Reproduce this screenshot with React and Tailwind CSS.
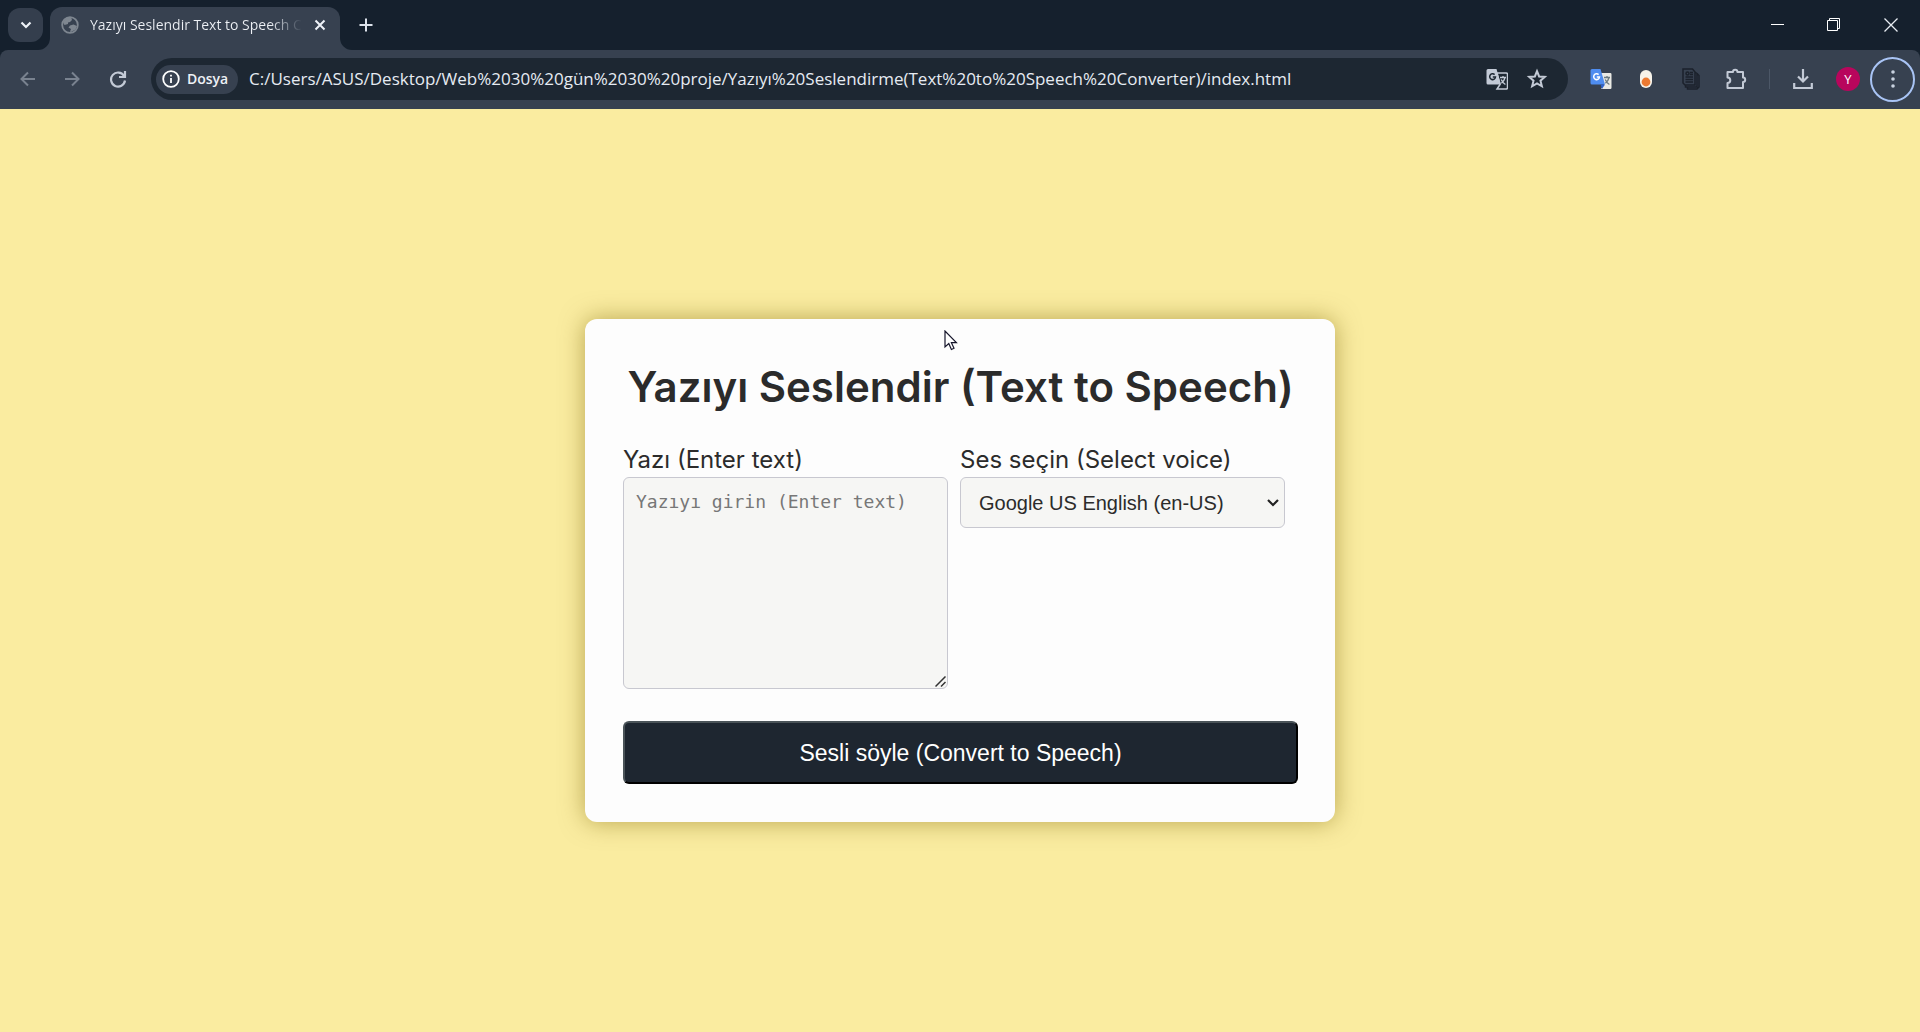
import React from "react";

const iconBtn = "flex shrink-0 items-center justify-center";

function TranslateIcon({ back, front, letter, glyph }) {
  return (
    <svg width="22" height="22" viewBox="0 0 22 22" aria-hidden="true">
      <path
        d="M11 5h9.300A1.200 1.200 0 0 1 21.500 6.200V19.800A1.200 1.200 0 0 1 20.300 21H11l3-4.500z"
        fill={front}
        stroke={glyph === "light" ? "#c3cad6" : "none"}
        strokeWidth="1.500"
      />
      <path d="M2 1h8.500l4.500 15.500H2A1.500 1.500 0 0 1 .5 15V2.500A1.500 1.500 0 0 1 2 1z" fill={back} />
      {glyph === "dark" && <path d="M10.500 16.500H15L12 21z" fill="#2f62c9" />}
      <path d="M8.600 6.600a2.900 2.900 0 1 0 .9 2.400H6.800" fill="none" stroke={letter} strokeWidth="1.500" />
      <path
        d="M14 9.500h6M17 8v1.500M19 9.500c-.6 2.800-2 4.600-3.600 5.800M15.200 11.500c.8 2 2.400 3.800 4.200 5"
        fill="none"
        stroke={glyph === "light" ? "#c3cad6" : "#6b7a80"}
        strokeWidth="1.300"
      />
    </svg>
  );
}

function TabStrip() {
  return (
    <div className="flex h-[50px] items-start pl-2">
      <button aria-label="Sekmelerde ara" className={iconBtn + " mt-2 h-[34px] w-[35px] rounded-xl bg-[#343e4d]"}>
        <svg width="12" height="8" viewBox="0 0 12 8" fill="none" stroke="#eef2f8" strokeWidth="2.200"><path d="M1.500 1.500L6 6l4.500-4.500" /></svg>
      </button>
      <div className="-ml-[5px] flex h-[50px] w-3 shrink-0 items-end">
        <svg width="12" height="12" viewBox="0 0 12 12" className="block" aria-hidden="true"><path d="M12 0v12H0A12 12 0 0 0 12 0z" fill="#374150" /></svg>
      </div>
      <div className="mt-[7px] flex h-[43px] w-[290px] shrink-0 items-center rounded-t-xl bg-[#374150] pb-2 pl-[11px]">
        <svg width="18" height="18" viewBox="0 0 18 18" aria-hidden="true">
          <circle cx="9" cy="9" r="7.800" fill="none" stroke="#7e8690" strokeWidth="1.800" />
          <path d="M2 6l3-4 5-1 1 3-2 2-2 .5V8L3.500 9zM9 9.500l3.500-1L16 10l-1.500 3.500L10 16l-1-.5 1-2.500-2.500-1.500z" fill="#7e8690" />
        </svg>
        <span className="ml-[11px] w-[212px] overflow-hidden bg-linear-to-r from-[#eef1f6] from-85% to-[#374150] bg-clip-text font-['Open_Sans','Noto_Sans',sans-serif] text-sm leading-5 whitespace-nowrap text-transparent">
          Yazıyı Seslendir Text to Speech Converter
        </span>
        <button aria-label="Sekmeyi kapat" className={iconBtn + " ml-2 size-5"}>
          <svg width="12" height="12" viewBox="0 0 12 12" fill="none" stroke="#eef2f8" strokeWidth="2"><path d="M1.500 1.500l9 9M10.500 1.500l-9 9" /></svg>
        </button>
      </div>
      <div className="flex h-[50px] w-3 shrink-0 items-end">
        <svg width="12" height="12" viewBox="0 0 12 12" className="block" aria-hidden="true"><path d="M0 0v12h12A12 12 0 0 1 0 0z" fill="#374150" /></svg>
      </div>
      <button aria-label="Yeni sekme" className={iconBtn + " mt-[11px] size-7"}>
        <svg width="14" height="14" viewBox="0 0 14 14" fill="none" stroke="#dde3ec" strokeWidth="2"><path d="M7 .5v13M.5 7h13" /></svg>
      </button>
      <div className="ml-auto flex h-[50px] items-center">
        <button aria-label="Simge durumuna küçült" className={iconBtn + " h-12 w-14"}>
          <svg width="14" height="14" viewBox="0 0 14 14" stroke="#fff"><path d="M0 6.500h13" /></svg>
        </button>
        <button aria-label="Geri yükle" className={iconBtn + " h-12 w-14"}>
          <svg width="14" height="14" viewBox="0 0 14 14" fill="none" stroke="#fff"><path d="M.5 2.500h10v10H.5zM2.500 2.500v-2h10v10h-2" /></svg>
        </button>
        <button aria-label="Kapat" className={iconBtn + " h-12 w-[58px]"}>
          <svg width="14" height="14" viewBox="0 0 14 14" stroke="#e8edf2" strokeWidth="1.300"><path d="M.5 .5l13 13M13.500 .5l-13 13" /></svg>
        </button>
      </div>
    </div>
  );
}

function Toolbar() {
  return (
    <div className="flex h-[59px] items-center rounded-t-lg bg-[#374150] pr-[5px] pb-px">
      <div className="flex w-[151px] shrink-0 items-center pl-[14px]">
        <button aria-label="Geri" className={iconBtn + " h-8 w-7"}>
          <svg width="16" height="16" viewBox="0 0 16 16" fill="none" stroke="#79828f" strokeWidth="2"><path d="M15 8H2M8 1.500L1.500 8 8 14.500" /></svg>
        </button>
        <button aria-label="İleri" className={iconBtn + " ml-4 h-8 w-7"}>
          <svg width="16" height="16" viewBox="0 0 16 16" fill="none" stroke="#79828f" strokeWidth="2"><path d="M1 8h13M8 1.500L14.500 8 8 14.500" /></svg>
        </button>
        <button aria-label="Yenile" className={iconBtn + " ml-[18px] h-8 w-7"}>
          <svg width="18" height="18" viewBox="0 0 18 18" fill="none" stroke="#c3cad6" strokeWidth="2.200"><path d="M15 5.800A7 7 0 1 0 16 10.500M16 1v6h-6" /></svg>
        </button>
      </div>
      <div className="flex h-[42px] min-w-0 flex-1 items-center rounded-full bg-[#1d2732] pr-5 pl-[5px]">
        <button className="flex h-[29px] w-[82px] shrink-0 items-center gap-[7px] rounded-full bg-[#374150] pl-[6px] font-['Open_Sans','Noto_Sans',sans-serif] text-sm leading-5 font-semibold text-[#eef1f6]">
          <svg width="18" height="18" viewBox="0 0 18 18" fill="none" stroke="#fff" strokeWidth="1.800" className="shrink-0"><circle cx="9" cy="9" r="7.800" /><path d="M9 8v5M9 4.800v1.800" /></svg>
          Dosya
        </button>
        <input
          aria-label="Adres çubuğu"
          defaultValue="C:/Users/ASUS/Desktop/Web%2030%20gün%2030%20proje/Yazıyı%20Seslendirme(Text%20to%20Speech%20Converter)/index.html"
          className="ml-[11px] min-w-0 flex-1 bg-transparent font-['Open_Sans','Noto_Sans',sans-serif] text-[17px] leading-6 text-[#e6ebf2] outline-none"
        />
        <button aria-label="Bu sayfayı çevir" className={iconBtn}>
          <TranslateIcon back="#c3cad6" front="#1d2732" letter="#1d2732" glyph="light" />
        </button>
        <button aria-label="Yer işareti ekle" className={iconBtn + " ml-[18px]"}>
          <svg width="22" height="22" viewBox="0 0 24 24" fill="none" stroke="#c3cad6" strokeWidth="2.200"><path d="M12 3.500l2.300 5.700 6.200.5-4.700 4.100 1.500 6.100L12 16.700l-5.300 3.200 1.500-6.100-4.700-4.100 6.200-.5z" /></svg>
        </button>
      </div>
      <div className="flex shrink-0 items-center pl-[22px]">
        <button aria-label="Google Çeviri" className={iconBtn}>
          <TranslateIcon back="#4f8df0" front="#e9e9e4" letter="#fff" glyph="dark" />
        </button>
        <button aria-label="Uzantı anahtarı" className={iconBtn + " ml-[28px]"}>
          <svg width="12" height="18" viewBox="0 0 12 18"><rect width="12" height="18" rx="6" fill="#f7f3ea" /><circle cx="6" cy="12" r="4.400" fill="#ec7a32" /></svg>
        </button>
        <button aria-label="Belge uzantısı" className={iconBtn + " ml-[30px]"}>
          <svg width="18" height="22" viewBox="0 0 18 22" fill="none" stroke="#1b212b" strokeWidth="1.500"><path d="M1 1h9.500L13 4v13H3l-2-2zM3.500 17v2H15V5.500L13 4M5.500 19v2h9.500l2-2V7.500l-2-2M3.500 9H11M3.500 11.500H11M3.500 14H11M8 4.500h3M8 6.500h3" /><circle cx="5.500" cy="5.500" r="1.500" /></svg>
        </button>
        <button aria-label="Uzantılar" className={iconBtn + " ml-[25px]"}>
          <svg width="22" height="22" viewBox="0 0 22 22" fill="none" stroke="#c3cad6" strokeWidth="2" strokeLinejoin="round"><path d="M2.500 4H8a2.200 2.200 0 0 1 4.400 0H18v5.500a2.200 2.200 0 0 1 0 4.400V20H2.500v-5a2.800 2.800 0 0 0 0-5.600z" /></svg>
        </button>
        <span className="ml-[22px] h-5 w-px bg-[#4c5767]" />
        <button aria-label="İndirilenler" className={iconBtn + " ml-[23px]"}>
          <svg width="20" height="22" viewBox="0 0 20 22" fill="none" stroke="#c3cad6" strokeWidth="2.200"><path d="M10 1v12M5 8.500l5 5 5-5M1.200 15v5h17.600v-5" /></svg>
        </button>
        <button className={iconBtn + " ml-[23px] size-6 rounded-full bg-[#b8065c] font-['Open_Sans','Noto_Sans',sans-serif] text-[13px] leading-4 text-white"}>Y</button>
        <button aria-label="Google Chrome'u özelleştir" className={iconBtn + " ml-[10px] size-[45px] rounded-full border-2 border-[#a9c4f5]"}>
          <svg width="4" height="20" viewBox="0 0 4 20" fill="#c9d2e0"><circle cx="2" cy="3" r="1.800" /><circle cx="2" cy="10" r="1.800" /><circle cx="2" cy="17" r="1.800" /></svg>
        </button>
      </div>
    </div>
  );
}

function SpeechCard() {
  return (
    <form
      className="relative w-[750px] max-w-full rounded-xl bg-[#fdfdfd] py-[38px] pr-[37px] pl-[38px] font-['Inter',sans-serif] text-[#2b2b2b] shadow-[0_0_24px_rgba(120,95,0,0.5)]"
      onSubmit={(e) => e.preventDefault()}
    >
      <h1 className="text-center text-[42px] leading-[60px] font-semibold whitespace-nowrap">Yazıyı Seslendir (Text to Speech)</h1>
      <div className="mt-[26px] flex gap-3">
        <div className="flex w-[325px] flex-col">
          <label htmlFor="text" className="text-2xl leading-[34px]">Yazı (Enter text)</label>
          <div className="relative">
            <textarea
              id="text"
              placeholder="Yazıyı girin (Enter text)"
              className="block h-[212px] w-full resize-none rounded-md border border-[#c8c8d0] bg-[#f6f6f4] px-3 py-3 font-['DejaVu_Sans_Mono',monospace] text-lg leading-6 placeholder:text-[#777]"
            />
            <svg width="11" height="11" viewBox="0 0 11 11" className="absolute right-[2px] bottom-[2px]" fill="none" stroke="#333" strokeWidth="1.500" aria-hidden="true">
              <path d="M.5 10.500l10-10M6 10.500L10.500 6" />
            </svg>
          </div>
        </div>
        <div className="flex w-[325px] flex-col">
          <label htmlFor="voice" className="text-2xl leading-[34px]">Ses seçin (Select voice)</label>
          <div className="relative">
            <select id="voice" className="block h-[51px] w-full appearance-none rounded-md border border-[#c8c8d0] bg-[#f6f6f4] px-[18px] font-['Liberation_Sans',Arial,sans-serif] text-xl">
              <option>Google US English (en-US)</option>
            </select>
            <svg width="12" height="8" viewBox="0 0 12 8" className="pointer-events-none absolute top-[22px] right-[6px]" fill="none" stroke="#222" strokeWidth="2.200" aria-hidden="true">
              <path d="M1 1l5 5 5-5" />
            </svg>
          </div>
        </div>
      </div>
      <button
        type="submit"
        className="mt-8 h-[63px] w-full rounded-md border-2 border-t-[#4a5358] border-r-black border-b-black border-l-[#4a5358] bg-[#1e2630] font-['Liberation_Sans',Arial,sans-serif] text-[23px] leading-7 text-white"
      >
        Sesli söyle (Convert to Speech)
      </button>
      <svg width="14" height="22" viewBox="0 0 14 22" className="absolute top-[11px] left-[359px]" fill="#fff" stroke="#15152a" strokeWidth="1.200" aria-hidden="true">
        <path d="M1 1v16l3.800-3.500 2.600 6 2.600-1.200-2.600-5.600h5z" />
      </svg>
    </form>
  );
}

export default function App() {
  return (
    <div className="flex min-h-screen flex-col bg-[#faeca0]">
      <header className="bg-[#15202d]">
        <TabStrip />
        <Toolbar />
      </header>
      <main className="flex flex-1 items-center justify-center">
        <SpeechCard />
      </main>
    </div>
  );
}
